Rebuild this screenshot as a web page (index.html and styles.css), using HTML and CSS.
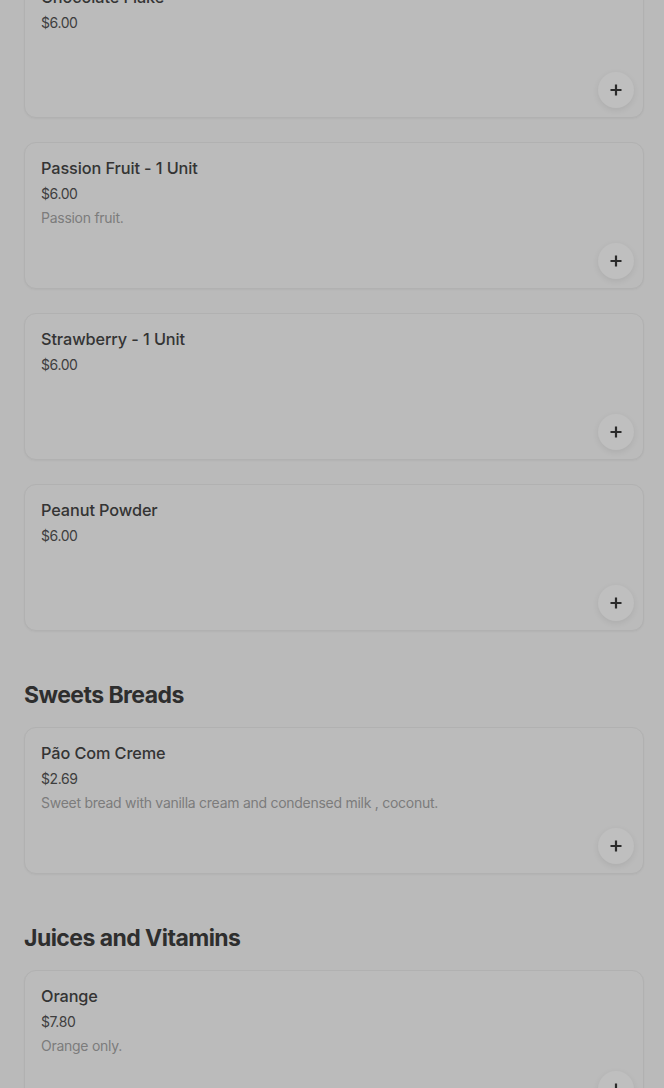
FILE: index.html
```html
<!DOCTYPE html>
<html>
<head>
<meta charset="utf-8">
<link rel="stylesheet" href="styles.css">
</head>
<body>
<div class="menu">
  <div class="list">
    <div class="card">
      <div class="name">Chocolate Flake</div>
      <div class="price">$6.00</div>
      <button class="add"><svg viewBox="0 0 14 14" width="14" height="14"><path d="M7 1.5v11M1.5 7h11" stroke="#2b2b2b" stroke-width="2.2" fill="none"/></svg></button>
    </div>
    <div class="card">
      <div class="name">Passion Fruit - 1 Unit</div>
      <div class="price">$6.00</div>
      <div class="desc">Passion fruit.</div>
      <button class="add"><svg viewBox="0 0 14 14" width="14" height="14"><path d="M7 1.5v11M1.5 7h11" stroke="#2b2b2b" stroke-width="2.2" fill="none"/></svg></button>
    </div>
    <div class="card">
      <div class="name">Strawberry - 1 Unit</div>
      <div class="price">$6.00</div>
      <button class="add"><svg viewBox="0 0 14 14" width="14" height="14"><path d="M7 1.5v11M1.5 7h11" stroke="#2b2b2b" stroke-width="2.2" fill="none"/></svg></button>
    </div>
    <div class="card">
      <div class="name">Peanut Powder</div>
      <div class="price">$6.00</div>
      <button class="add"><svg viewBox="0 0 14 14" width="14" height="14"><path d="M7 1.5v11M1.5 7h11" stroke="#2b2b2b" stroke-width="2.2" fill="none"/></svg></button>
    </div>
  </div>

  <h2 class="section">Sweets Breads</h2>
  <div class="list">
    <div class="card">
      <div class="name">Pão Com Creme</div>
      <div class="price">$2.69</div>
      <div class="desc">Sweet bread with vanilla cream and condensed milk , coconut.</div>
      <button class="add"><svg viewBox="0 0 14 14" width="14" height="14"><path d="M7 1.5v11M1.5 7h11" stroke="#2b2b2b" stroke-width="2.2" fill="none"/></svg></button>
    </div>
  </div>

  <h2 class="section">Juices and Vitamins</h2>
  <div class="list">
    <div class="card">
      <div class="name">Orange</div>
      <div class="price">$7.80</div>
      <div class="desc">Orange only.</div>
      <button class="add"><svg viewBox="0 0 14 14" width="14" height="14"><path d="M7 1.5v11M1.5 7h11" stroke="#2b2b2b" stroke-width="2.2" fill="none"/></svg></button>
    </div>
  </div>
</div>
</body>
</html>
```

FILE: styles.css
```css
html, body {
  margin: 0;
  padding: 0;
  background: #bababa;
  height: 100%;
  overflow: hidden;
}
body {
  font-family: Inter, "Liberation Sans", sans-serif;
  color: #2e2e2e;
}
.menu {
  margin: -29px 20px 0 24px;
}
.list {
  display: flex;
  flex-direction: column;
  gap: 24px;
}
.card {
  box-sizing: border-box;
  height: 147px;
  border: 1px solid #b1b1b1;
  border-radius: 12px;
  background: #bbbbbb;
  box-shadow: 0 1px 2px rgba(0,0,0,0.04);
  padding: 14px 9px 9px 16px;
  display: flex;
  flex-direction: column;
}
.name {
  font-size: 16.3px;
  font-weight: 500;
  line-height: 22px;
  color: #343434;
  letter-spacing: -0.1px;
}
.price {
  margin-top: 4px;
  font-size: 14px;
  line-height: 22px;
  color: #3e3e3e;
  letter-spacing: -0.4px;
}
.desc {
  margin-top: 2px;
  font-size: 14px;
  line-height: 22px;
  color: #7c7c7c;
  letter-spacing: -0.27px;
}
.add {
  margin-top: auto;
  align-self: flex-end;
  width: 36px;
  height: 36px;
  border-radius: 50%;
  border: none;
  padding: 0;
  background: #bfbfbf;
  box-shadow: 0 2px 6px rgba(0,0,0,0.08);
  display: flex;
  align-items: center;
  justify-content: center;
}
.section {
  margin: 48px 0 16px 0;
  font-family: Inter, "Liberation Sans", sans-serif;
  font-size: 23px;
  font-weight: 700;
  line-height: 32px;
  letter-spacing: -0.55px;
  color: #2e2e2e;
}
```
